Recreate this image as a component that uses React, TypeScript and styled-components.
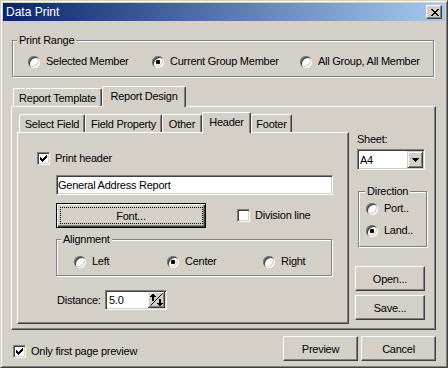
import React, { FC } from "react";
import styled, { createGlobalStyle } from "styled-components";

const GlobalStyle = createGlobalStyle`
  html, body { margin: 0; padding: 0; background: #d4d0c8; }
  body {
    font-family: "Liberation Sans", Arial, sans-serif;
    font-size: 11px;
    letter-spacing: -0.25px;
    color: #000;
  }
  * { box-sizing: border-box; }
`;

const Window = styled.div`
  width: 448px;
  height: 368px;
  background: #d4d0c8;
  border: 1px solid;
  border-color: #d4d0c8 #404040 #404040 #d4d0c8;
  box-shadow: inset 1px 1px #fff, inset -1px -1px #808080;
  padding: 2px;
  display: flex;
  flex-direction: column;
`;

const TitleBar = styled.div`
  height: 18px;
  flex: none;
  display: flex;
  align-items: center;
  padding-left: 3px;
  background: linear-gradient(to right, #0a246a, #a6caf0);
  color: #fff;
  font-size: 12px;
  letter-spacing: 0;
`;

const TitleText = styled.span`
  flex: 1;
  line-height: 18px;
`;

const CloseBox = styled.div`
  width: 16px;
  height: 14px;
  margin-right: 3px;
  background: #d4d0c8;
  border: 1px solid;
  border-color: #fff #404040 #404040 #fff;
  box-shadow: inset -1px -1px #808080;
  display: flex;
  align-items: center;
  justify-content: center;
  padding-left: 1px;
`;

const Body = styled.div`
  display: flex;
  flex-direction: column;
  padding: 12px 9px 0 8px;
`;

const Group = styled.fieldset`
  margin: 0;
  padding: 0;
  min-width: 0;
  border: 1px solid #808080;
  box-shadow: inset 1px 1px #fff, 1px 1px #fff;
`;

const Caption = styled.legend<{ $indent?: number }>`
  margin-left: ${({ $indent }) => $indent ?? 4}px;
  padding: 0 2px;
  height: 14px;
  line-height: 14px;
  background: #d4d0c8;
`;

const RangeGroup = styled(Group)`
  margin: 0 2px 0 1px;
`;

const AlignGroup = styled(Group)`
  margin-top: 4px;
  width: 276px;
`;

const DirectionGroup = styled(Group)`
  margin: 14px 0 0 3px;
  width: 69px;
`;

const OptionGrid = styled.div<{ $cols: string; $pad: string }>`
  display: grid;
  grid-template-columns: ${({ $cols }) => $cols};
  padding: ${({ $pad }) => $pad};
`;

const OptionStack = styled.div`
  display: flex;
  flex-direction: column;
  gap: 9px;
  padding: 4px 0 9px 7px;
`;

const Option = styled.label<{ $gap?: number }>`
  display: flex;
  align-items: center;
  gap: ${({ $gap }) => $gap ?? 6}px;
  height: 13px;
  line-height: 13px;
  white-space: nowrap;
`;

const RadioMark = styled.span<{ $on?: boolean }>`
  width: 12px;
  height: 12px;
  flex: none;
  border-radius: 50%;
  background: #fff;
  box-shadow: inset 1px 1px #808080, inset -1px -1px #fff, inset 2px 2px #404040,
    inset -2px -2px #d4d0c8;
  display: flex;
  align-items: center;
  justify-content: center;

  &::after {
    content: "";
    width: 4px;
    height: 4px;
    border-radius: 1px;
    background: ${({ $on }) => ($on ? "#000" : "transparent")};
  }
`;

const CheckMark = styled.span`
  width: 13px;
  height: 13px;
  flex: none;
  background: #fff;
  border: 1px solid;
  border-color: #808080 #fff #fff #808080;
  box-shadow: inset 1px 1px #404040, inset -1px -1px #d4d0c8;
  display: flex;
  align-items: center;
  justify-content: center;
`;

const TabStrip = styled.div<{ $top?: number }>`
  display: flex;
  align-items: flex-end;
  height: 20px;
  margin-top: ${({ $top }) => $top ?? 0}px;
  padding-left: 2px;
  flex: none;
`;

const Tab = styled.div<{ $active?: boolean; $w: number }>`
  position: relative;
  z-index: ${({ $active }) => ($active ? 1 : 0)};
  width: ${({ $w }) => $w}px;
  height: ${({ $active }) => ($active ? 21 : 18)}px;
  margin-bottom: ${({ $active }) => ($active ? -1 : 0)}px;
  padding-bottom: ${({ $active }) => ($active ? 2 : 0)}px;
  background: #d4d0c8;
  border-top: 1px solid #fff;
  border-left: 1px solid #fff;
  border-right: 1px solid #404040;
  border-radius: 2px 2px 0 0;
  box-shadow: inset -1px 0 #808080;
  display: flex;
  align-items: center;
  justify-content: center;
  white-space: nowrap;
`;

const Panel = styled.div`
  background: #d4d0c8;
  border: 1px solid;
  border-color: #fff #404040 #404040 #fff;
  box-shadow: inset -1px -1px #808080;
`;

const OuterPanel = styled(Panel)`
  display: flex;
  gap: 6px;
  padding: 5px 7px 5px 5px;
`;

const InnerTabs = styled.div`
  width: 332px;
  display: flex;
  flex-direction: column;
`;

const InnerPanel = styled(Panel)`
  height: 192px;
  padding: 19px 0 0 19px;
  display: flex;
  flex-direction: column;
  align-items: flex-start;
`;

const Indented = styled.div`
  margin-left: 19px;
  display: flex;
  flex-direction: column;
`;

const TextBox = styled.input`
  display: block;
  width: 277px;
  height: 20px;
  margin: 10px 0 0;
  padding: 0 1px;
  font: inherit;
  letter-spacing: inherit;
  color: #000;
  background: #fff;
  outline: none;
  border: 1px solid;
  border-color: #808080 #fff #fff #808080;
  box-shadow: inset 1px 1px #404040, inset -1px -1px #d4d0c8;
`;

const ButtonRow = styled.div`
  display: flex;
  align-items: center;
  margin-top: 8px;
`;

const PushButton = styled.button<{ $w: number; $h?: number; $default?: boolean }>`
  position: relative;
  width: ${({ $w }) => $w}px;
  height: ${({ $h }) => $h ?? 25}px;
  flex: none;
  padding: 0;
  font: inherit;
  letter-spacing: inherit;
  color: #000;
  background: #d4d0c8;
  border: 1px solid;
  border-color: ${({ $default }) =>
    $default ? "#000" : "#fff #404040 #404040 #fff"};
  box-shadow: ${({ $default }) =>
    $default
      ? "inset 1px 1px #fff, inset -1px -1px #404040, inset -2px -2px #808080"
      : "inset -1px -1px #808080"};

  &::after {
    content: "";
    display: ${({ $default }) => ($default ? "block" : "none")};
    position: absolute;
    inset: 3px 2px 3px 3px;
    border: 1px dotted #000;
  }
`;

const DivisionOption = styled(Option)`
  margin-left: 31px;
`;

const DistanceRow = styled.div`
  display: flex;
  align-items: center;
  margin-top: 14px;
`;

const FieldLabel = styled.span`
  width: 48px;
  margin-left: 1px;
`;

const NumberBox = styled.div`
  width: 62px;
  height: 20px;
  display: flex;
  align-items: center;
  justify-content: space-between;
  padding: 1px 1px 1px 3px;
  background: #fff;
  border: 1px solid;
  border-color: #808080 #fff #fff #808080;
  box-shadow: inset 1px 1px #404040, inset -1px -1px #d4d0c8;
`;

const SideColumn = styled.div`
  width: 73px;
  display: flex;
  flex-direction: column;
  align-items: flex-start;
`;

const SheetLabel = styled.span`
  margin: 21px 0 0 2px;
  line-height: 13px;
`;

const Combo = styled.div`
  width: 68px;
  height: 21px;
  margin: 3px 0 0 2px;
  display: flex;
  align-items: center;
  padding: 2px 1px 2px 2px;
  background: #fff;
  border: 1px solid;
  border-color: #808080 #fff #fff #808080;
  box-shadow: inset 1px 1px #404040, inset -1px -1px #d4d0c8;
`;

const ComboText = styled.span`
  flex: 1;
`;

const ComboButton = styled.span`
  width: 16px;
  height: 17px;
  background: #d4d0c8;
  border: 1px solid;
  border-color: #d4d0c8 #404040 #404040 #d4d0c8;
  box-shadow: inset 1px 1px #fff, inset -1px -1px #808080;
  display: flex;
  align-items: center;
  justify-content: center;
`;

const SideButton = styled(PushButton)<{ $top: number }>`
  margin-top: ${({ $top }) => $top}px;
`;

const Footer = styled.div`
  display: flex;
  align-items: flex-start;
  gap: 3px;
  margin-top: 6px;
  padding-left: 2px;
`;

const FooterOption = styled(Option)`
  margin: 9px auto 0 0;
`;

const Tick: FC = () => (
  <svg width="7" height="7" viewBox="0 0 7 7" shapeRendering="crispEdges">
    <path
      d="M6 0h1v1H6z M5 1h2v1H5z M0 2h1v1H0z M4 2h3v1H4z M0 3h2v1H0z M3 3h3v1H3z M0 4h5v1H0z M1 5h3v1H1z M2 6h1v1H2z"
      fill="#000"
    />
  </svg>
);

const CloseGlyph: FC = () => (
  <svg width="8" height="7" viewBox="0 0 8 7" shapeRendering="crispEdges">
    <path
      d="M0 0h2v1H0z M6 0h2v1H6z M1 1h2v1H1z M5 1h2v1H5z M2 2h4v1H2z M3 3h2v1H3z M2 4h4v1H2z M1 5h2v1H1z M5 5h2v1H5z M0 6h2v1H0z M6 6h2v1H6z"
      fill="#000"
    />
  </svg>
);

const DownArrow: FC = () => (
  <svg width="7" height="4" viewBox="0 0 7 4" shapeRendering="crispEdges">
    <path d="M0 0h7v1H0z M1 1h5v1H1z M2 2h3v1H2z M3 3h1v1H3z" fill="#000" />
  </svg>
);

const SpinGlyph: FC = () => (
  <svg width="17" height="16" viewBox="0 0 17 16">
    <g shapeRendering="crispEdges">
      <rect width="17" height="16" fill="#d4d0c8" />
      <path d="M0 0h16v1H1v14H0z" fill="#fff" />
      <path d="M16 0h1v16H0v-1h16z" fill="#404040" />
      <path d="M15 1h1v14H1v-1h14z" fill="#808080" />
      <path
        d="M4 2h2v1H4z M3 3h4v1H3z M2 4h6v1H2z M4 5h2v4H4z M11 7h2v4h-2z M9 11h6v1H9z M10 12h4v1h-4z M11 13h2v1h-2z"
        fill="#000"
      />
    </g>
    <path d="M2.5 13.5L14.5 1.5" stroke="#000" strokeWidth="1" />
  </svg>
);

const Radio: FC<{ label: string; on?: boolean }> = ({ label, on }) => (
  <Option>
    <RadioMark $on={on} />
    {label}
  </Option>
);

const outerTabs = [
  { label: "Report Template", w: 89 },
  { label: "Report Design", w: 84, active: true },
];

const innerTabs = [
  { label: "Select Field", w: 66 },
  { label: "Field Property", w: 77 },
  { label: "Other", w: 40 },
  { label: "Header", w: 49, active: true },
  { label: "Footer", w: 41 },
];

const App: FC = () => {
  return (
    <React.Fragment>
      <GlobalStyle />
      <Window>
        <TitleBar>
          <TitleText>Data Print</TitleText>
          <CloseBox>
            <CloseGlyph />
          </CloseBox>
        </TitleBar>
        <Body>
          <RangeGroup>
            <Caption>Print Range</Caption>
            <OptionGrid $cols="124px 148px auto" $pad="8px 0 8px 15px">
              <Radio label="Selected Member" />
              <Radio label="Current Group Member" on />
              <Radio label="All Group, All Member" />
            </OptionGrid>
          </RangeGroup>

          <TabStrip $top={9}>
            {outerTabs.map((t) => (
              <Tab key={t.label} $w={t.w} $active={t.active}>
                {t.label}
              </Tab>
            ))}
          </TabStrip>
          <OuterPanel>
            <InnerTabs>
              <TabStrip>
                {innerTabs.map((t) => (
                  <Tab key={t.label} $w={t.w} $active={t.active}>
                    {t.label}
                  </Tab>
                ))}
              </TabStrip>
              <InnerPanel>
                <Option $gap={5}>
                  <CheckMark>
                    <Tick />
                  </CheckMark>
                  Print header
                </Option>
                <Indented>
                  <TextBox readOnly defaultValue="General Address Report" />
                  <ButtonRow>
                    <PushButton $w={150} $default>
                      Font...
                    </PushButton>
                    <DivisionOption $gap={5}>
                      <CheckMark />
                      Division line
                    </DivisionOption>
                  </ButtonRow>
                  <AlignGroup>
                    <Caption>Alignment</Caption>
                    <OptionGrid $cols="93px 96px auto" $pad="9px 0 7px 17px">
                      <Radio label="Left" />
                      <Radio label="Center" on />
                      <Radio label="Right" />
                    </OptionGrid>
                  </AlignGroup>
                  <DistanceRow>
                    <FieldLabel>Distance:</FieldLabel>
                    <NumberBox>
                      <span>5.0</span>
                      <SpinGlyph />
                    </NumberBox>
                  </DistanceRow>
                </Indented>
              </InnerPanel>
            </InnerTabs>

            <SideColumn>
              <SheetLabel>Sheet:</SheetLabel>
              <Combo>
                <ComboText>A4</ComboText>
                <ComboButton>
                  <DownArrow />
                </ComboButton>
              </Combo>
              <DirectionGroup>
                <Caption $indent={6}>Direction</Caption>
                <OptionStack>
                  <Radio label="Port.." />
                  <Radio label="Land.." on />
                </OptionStack>
              </DirectionGroup>
              <SideButton $w={70} $h={25} $top={19}>
                Open...
              </SideButton>
              <SideButton $w={70} $h={25} $top={4}>
                Save...
              </SideButton>
            </SideColumn>
          </OuterPanel>

          <Footer>
            <FooterOption $gap={5}>
              <CheckMark>
                <Tick />
              </CheckMark>
              Only first page preview
            </FooterOption>
            <PushButton $w={75}>Preview</PushButton>
            <PushButton $w={75}>Cancel</PushButton>
          </Footer>
        </Body>
      </Window>
    </React.Fragment>
  );
};

export default App;
